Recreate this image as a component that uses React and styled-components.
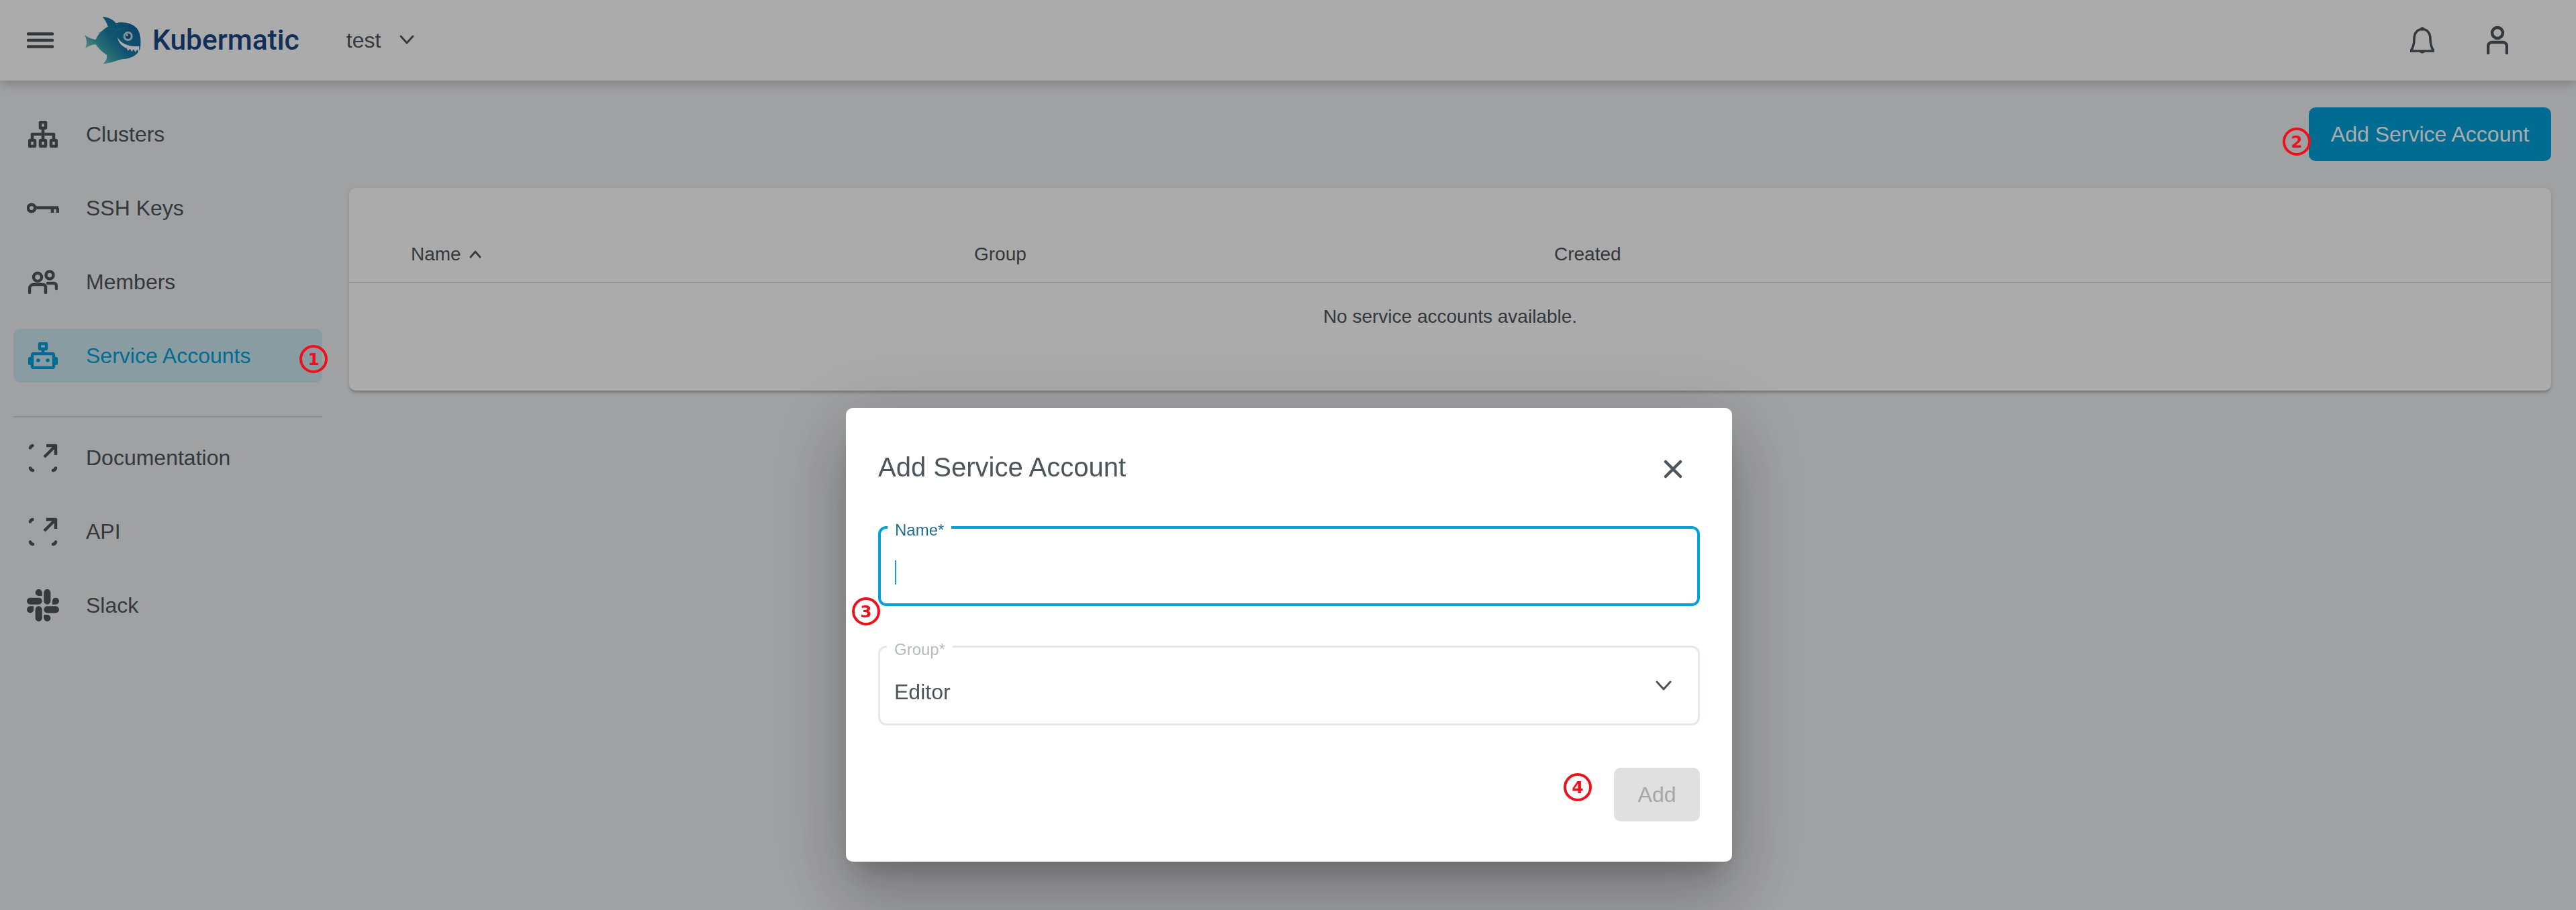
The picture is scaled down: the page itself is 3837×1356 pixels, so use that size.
import React from 'react';
import styled, { createGlobalStyle } from 'styled-components';
import { SiSlack } from 'react-icons/si';

const GlobalStyle = createGlobalStyle`
  html, body {
    margin: 0;
    padding: 0;
    height: 100%;
    overflow: hidden;
  }
  * {
    box-sizing: border-box;
  }
  body {
    font-family: "Liberation Sans", Arial, sans-serif;
    color: #4d555c;
    background-color: #eff0f3;
  }
`;

const Shell = styled.div`
  width: 3837px;
  height: 1356px;
  display: flex;
  flex-direction: column;
  overflow: hidden;
`;

const Toolbar = styled.header`
  position: relative;
  z-index: 1;
  flex: none;
  height: 120px;
  display: flex;
  align-items: center;
  padding: 0 101px 0 40px;
  background-color: #ffffff;
  box-shadow: 0 5px 14px rgba(0, 0, 0, 0.2);
`;

const LogoMark = styled.svg`
  display: block;
  width: 84px;
  height: 70px;
  margin-left: 46px;
`;

const Wordmark = styled.span`
  margin-left: 17px;
  font-family: Roboto, sans-serif;
  font-size: 42.5px;
  font-weight: 500;
  line-height: 1;
  color: #184887;
`;

const ProjectName = styled.span`
  margin-left: 70px;
  font-size: 32px;
`;

const ProjectChevron = styled.svg`
  display: block;
  width: 22px;
  height: 14px;
  margin: -2px 0 0 28px;
`;

const ToolbarActions = styled.div`
  margin-left: auto;
  display: flex;
  align-items: center;
  gap: 78px;
`;

const Body = styled.div`
  flex: 1;
  display: flex;
  min-height: 0;
`;

const Sidebar = styled.nav`
  flex: none;
  width: 520px;
  padding: 40px 40px 0 20px;
`;

const NavGroup = styled.div`
  display: flex;
  flex-direction: column;
  gap: 30px;
`;

const NavItem = styled.a`
  height: 80px;
  display: flex;
  align-items: center;
  border-radius: 10px;
  font-size: 32px;
  color: ${({ $active }) => ($active ? '#00a2da' : '#4d555c')};
  background-color: ${({ $active }) => ($active ? '#cde9f2' : 'transparent')};
`;

const NavIcon = styled.span`
  flex: none;
  width: 108px;
  padding-left: 22px;
  display: flex;
  align-items: center;
`;

const NavDivider = styled.hr`
  height: 2px;
  margin: 50px 0 20px;
  border: 0;
  background-color: #d3d5d9;
`;

const Main = styled.main`
  flex: 1;
  min-width: 0;
  padding: 40px 37px 0 0;
`;

const ActionRow = styled.div`
  display: flex;
  justify-content: flex-end;
`;

const PrimaryButton = styled.button`
  width: 361px;
  height: 80px;
  border: 0;
  border-radius: 10px;
  font-family: inherit;
  font-size: 32px;
  color: #ffffff;
  background-color: #00a2da;
`;

const Card = styled.section`
  height: 302px;
  margin-top: 40px;
  border-radius: 10px;
  background-color: #ffffff;
  box-shadow: 0 5px 5px -3px rgba(0, 0, 0, 0.25), 0 2px 6px rgba(0, 0, 0, 0.12);
`;

const TableHead = styled.div`
  height: 142px;
  padding: 82px 0 0 92px;
  display: grid;
  grid-template-columns: 839px 864px 1fr;
  border-bottom: 2px solid #dcdde0;
  font-size: 28px;
  line-height: 34px;
`;

const HeadCell = styled.span`
  display: flex;
  align-items: center;
  align-self: start;
  gap: 12px;
`;

const EmptyRow = styled.div`
  padding-top: 33px;
  text-align: center;
  font-size: 28px;
  line-height: 34px;
`;

const Backdrop = styled.div`
  position: fixed;
  inset: 0;
  z-index: 2;
  display: flex;
  justify-content: center;
  align-items: flex-start;
  padding: 608px 0 0 3px;
  background-color: rgba(0, 0, 0, 0.33);
`;

const Dialog = styled.div`
  width: 1320px;
  height: 676px;
  padding: 64px 48px 0;
  border-radius: 10px;
  background-color: #ffffff;
  box-shadow: 0 27px 37px -17px rgba(0, 0, 0, 0.2), 0 60px 95px 7px rgba(0, 0, 0, 0.14),
    0 22px 115px 20px rgba(0, 0, 0, 0.12);
`;

const DialogHeader = styled.div`
  height: 48px;
  display: flex;
  align-items: center;
  justify-content: space-between;
`;

const DialogTitle = styled.h2`
  margin: 0;
  font-size: 40px;
  font-weight: 400;
  line-height: 48px;
`;

const CloseIcon = styled.svg`
  display: block;
  width: 28px;
  height: 28px;
  margin: 5px 26px 0 0;
`;

const Field = styled.div`
  position: relative;
  height: 119px;
  margin-top: ${({ $gap }) => $gap}px;
  padding: 0 21px;
  display: flex;
  align-items: center;
  justify-content: space-between;
  border-radius: 12px;
  border: ${({ $focused }) => ($focused ? '4px solid #00a2da' : '3px solid #e6e7ea')};
`;

const FieldLabel = styled.label`
  position: absolute;
  left: 10px;
  top: ${({ $focused }) => ($focused ? '-10px' : '-9px')};
  padding: 0 11px;
  font-size: 24px;
  line-height: 24px;
  background-color: #ffffff;
  color: ${({ $focused }) => ($focused ? '#1f7197' : '#b7b9bd')};
`;

const Caret = styled.span`
  display: block;
  width: 2px;
  height: 36px;
  margin-top: 18px;
  background-color: #2196f3;
`;

const FieldValue = styled.span`
  margin-top: 18px;
  font-size: 32px;
  line-height: 38px;
`;

const SelectChevron = styled.svg`
  display: block;
  width: 24px;
  height: 15px;
  margin: 0 18px 0 0;
`;

const DialogActions = styled.div`
  margin-top: 63px;
  display: flex;
  justify-content: flex-end;
`;

const DisabledButton = styled.button`
  width: 128px;
  height: 80px;
  border: 0;
  border-radius: 10px;
  font-family: inherit;
  font-size: 32px;
  color: #a6a6a6;
  background-color: #e0e0e0;
`;

const Marker = styled.span`
  position: fixed;
  z-index: 3;
  left: ${({ $x }) => $x - 21}px;
  top: ${({ $y }) => $y - 21}px;
  width: 42px;
  height: 42px;
  display: flex;
  align-items: center;
  justify-content: center;
  border: 4.5px solid #f0101c;
  border-radius: 50%;
  font-family: "DejaVu Sans", sans-serif;
  font-size: 25px;
  font-weight: 700;
  line-height: 1;
  color: #f0101c;
`;

const stroke = {
  fill: 'none',
  stroke: 'currentColor',
  strokeWidth: 4.5,
  strokeLinecap: 'round',
  strokeLinejoin: 'round',
};

const MenuIcon = () => (
  <svg width="40" height="24" viewBox="0 0 40 24" style={{ display: 'block' }}>
    <path d="M2 2.5h36M2 12h36M2 21.5h36" {...stroke} strokeWidth="4.5" />
  </svg>
);

const FishLogo = () => (
  <LogoMark viewBox="78 48 252 210">
    <defs>
      <linearGradient id="fishBody" x1="0.05" y1="0.85" x2="0.9" y2="0.2">
        <stop offset="0" stopColor="#a4dccf" />
        <stop offset="0.3" stopColor="#3ba5ad" />
        <stop offset="0.55" stopColor="#1a7fa8" />
        <stop offset="1" stopColor="#0f6a9f" />
      </linearGradient>
    </defs>
    <path
      fill="url(#fishBody)"
      d="M158 48C185 50 205 60 218 76C250 68 290 76 312 100C326 118 330 145 328 175C326 212 295 236 245 238C225 242 190 258 160 258C175 245 180 232 176 218C155 205 140 190 128 172C118 170 100 176 82 188C88 170 90 152 78 130C95 140 112 150 128 150C136 128 155 108 182 92C178 75 168 60 158 48Z"
    />
    <path
      d="M140 122C175 100 200 98 226 106L262 92M226 106C205 122 180 150 170 180M140 175C170 180 200 186 238 238M218 76C222 88 226 98 240 116"
      fill="none"
      stroke="#2f93b4"
      strokeWidth="2"
    />
    <circle cx="272" cy="135" r="21" fill="#c8e2ea" />
    <circle cx="272" cy="135" r="12" fill="#0d5f92" />
    <circle cx="268" cy="130" r="4" fill="#ffffff" />
    <path
      d="M225 140C240 165 270 182 322 180L320 206L313 194L305 206L297 193L289 204L281 191L272 200L266 188C245 180 230 165 225 140Z"
      fill="#ffffff"
    />
  </LogoMark>
);

const DownChevron = () => (
  <ProjectChevron viewBox="0 0 22 14">
    <path d="M2 2l9 10 9-10" {...stroke} strokeWidth="2.8" />
  </ProjectChevron>
);

const BellIcon = () => (
  <svg width="36" height="40" viewBox="0 0 36 40" style={{ display: 'block' }}>
    <path d="M1 36C5 30 6 26 6 18C6 9 11 3.5 18 3.5S30 9 30 18C30 26 31 30 35 36Z" {...stroke} strokeWidth="3.6" />
    <path d="M15 36a3.2 3.2 0 0 0 6 0" fill="currentColor" stroke="currentColor" strokeWidth="3" />
    <circle cx="18" cy="3" r="2.8" fill="currentColor" />
  </svg>
);

const PersonIcon = () => (
  <svg width="32" height="42" viewBox="0 0 32 42" style={{ display: 'block' }}>
    <circle cx="16" cy="10" r="8" {...stroke} />
    <path d="M2 40V30a6 6 0 0 1 6-6h16a6 6 0 0 1 6 6v10" {...stroke} />
  </svg>
);

const ClustersIcon = () => (
  <svg width="44" height="40" viewBox="0 0 44 40" style={{ display: 'block' }}>
    <g {...stroke}>
      <rect x="18" y="2" width="8" height="9" rx="1" />
      <rect x="2" y="29" width="8" height="9" rx="1" />
      <rect x="18" y="29" width="8" height="9" rx="1" />
      <rect x="34" y="29" width="8" height="9" rx="1" />
      <path d="M22 11v18M6 29v-9h32v9" strokeLinecap="butt" />
    </g>
  </svg>
);

const KeyIcon = () => (
  <svg width="48" height="16" viewBox="0 0 48 16" style={{ display: 'block', marginLeft: '-2px' }}>
    <circle cx="7" cy="8" r="5.2" {...stroke} />
    <path d="M13 7.5h34M38 8v7M46 8v7" {...stroke} strokeLinecap="butt" />
  </svg>
);

const MembersIcon = () => (
  <svg width="44" height="36" viewBox="0 0 44 36" style={{ display: 'block' }}>
    <g {...stroke}>
      <circle cx="14" cy="11" r="6" />
      <circle cx="32" cy="8" r="5.5" />
      <path d="M2 34v-6a6 6 0 0 1 6-6h14a4 4 0 0 1 4 4v8" />
      <path d="M29 20h9a4 4 0 0 1 4 4v4" />
    </g>
  </svg>
);

const RobotIcon = () => (
  <svg width="44" height="40" viewBox="0 0 44 40" style={{ display: 'block' }}>
    <g {...stroke}>
      <rect x="17" y="2" width="10" height="8" rx="1" />
      <path d="M22 10v7" />
      <rect x="6" y="17" width="32" height="21" rx="2" />
    </g>
    <rect x="0" y="22" width="5" height="12" rx="2" fill="currentColor" />
    <rect x="39" y="22" width="5" height="12" rx="2" fill="currentColor" />
    <circle cx="15" cy="27" r="2.8" fill="currentColor" />
    <circle cx="29" cy="27" r="2.8" fill="currentColor" />
  </svg>
);

const ExternalIcon = () => (
  <svg width="44" height="44" viewBox="0 0 44 44" style={{ display: 'block' }}>
    <g {...stroke}>
      <path d="M3 7.5A5 5 0 0 1 6.5 4" />
      <path d="M3 37.5A5 5 0 0 0 7 41" />
      <path d="M41 37.5A5 5 0 0 1 37 41" />
      <path d="M24 21L40 5M27 4h14v14" strokeLinecap="butt" />
    </g>
  </svg>
);

const navItems = [
  { label: 'Clusters', icon: <ClustersIcon /> },
  { label: 'SSH Keys', icon: <KeyIcon /> },
  { label: 'Members', icon: <MembersIcon /> },
  { label: 'Service Accounts', icon: <RobotIcon />, active: true },
];

const linkItems = [
  { label: 'Documentation', icon: <ExternalIcon /> },
  { label: 'API', icon: <ExternalIcon /> },
  { label: 'Slack', icon: <SiSlack size={48} style={{ marginLeft: '-2px' }} /> },
];

const markers = [
  { n: 1, x: 467, y: 535 },
  { n: 2, x: 3421, y: 211 },
  { n: 3, x: 1290, y: 911 },
  { n: 4, x: 2350, y: 1173 },
];

const App = () => {
  return (
    <Shell>
      <GlobalStyle />
      <Toolbar>
        <MenuIcon />
        <FishLogo />
        <Wordmark>Kubermatic</Wordmark>
        <ProjectName>test</ProjectName>
        <DownChevron />
        <ToolbarActions>
          <BellIcon />
          <PersonIcon />
        </ToolbarActions>
      </Toolbar>
      <Body>
        <Sidebar>
          <NavGroup>
            {navItems.map((item) => (
              <NavItem key={item.label} $active={item.active}>
                <NavIcon>{item.icon}</NavIcon>
                {item.label}
              </NavItem>
            ))}
          </NavGroup>
          <NavDivider />
          <NavGroup>
            {linkItems.map((item) => (
              <NavItem key={item.label}>
                <NavIcon>{item.icon}</NavIcon>
                {item.label}
              </NavItem>
            ))}
          </NavGroup>
        </Sidebar>
        <Main>
          <ActionRow>
            <PrimaryButton>Add Service Account</PrimaryButton>
          </ActionRow>
          <Card>
            <TableHead>
              <HeadCell>
                Name
                <svg width="18" height="12" viewBox="0 0 18 12">
                  <path d="M2 10l7-8 7 8" {...stroke} strokeWidth="2.8" />
                </svg>
              </HeadCell>
              <HeadCell>Group</HeadCell>
              <HeadCell>Created</HeadCell>
            </TableHead>
            <EmptyRow>No service accounts available.</EmptyRow>
          </Card>
        </Main>
      </Body>
      <Backdrop>
        <Dialog>
          <DialogHeader>
            <DialogTitle>Add Service Account</DialogTitle>
            <CloseIcon viewBox="0 0 28 28">
              <path d="M3 3l22 22M25 3L3 25" {...stroke} />
            </CloseIcon>
          </DialogHeader>
          <Field $gap={64} $focused>
            <FieldLabel $focused>Name*</FieldLabel>
            <Caret />
          </Field>
          <Field $gap={59}>
            <FieldLabel>Group*</FieldLabel>
            <FieldValue>Editor</FieldValue>
            <SelectChevron viewBox="0 0 24 15">
              <path d="M2 2l10 11L22 2" {...stroke} strokeWidth="3" />
            </SelectChevron>
          </Field>
          <DialogActions>
            <DisabledButton disabled>Add</DisabledButton>
          </DialogActions>
        </Dialog>
      </Backdrop>
      {markers.map((m) => (
        <Marker key={m.n} $x={m.x} $y={m.y}>
          {m.n}
        </Marker>
      ))}
    </Shell>
  );
};

export default App;
